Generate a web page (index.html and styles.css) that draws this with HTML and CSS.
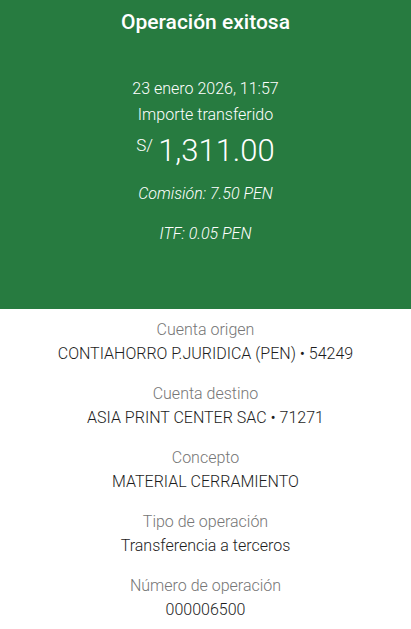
FILE: index.html
```html
<!DOCTYPE html>
<html lang="es">
<head>
    <meta charset="UTF-8">
    <meta name="viewport" content="width=device-width, initial-scale=1.0">
    <title>Operación exitosa</title>
    <link rel="stylesheet" href="styles.css">
</head>
<body>
    <header class="hero">
        <h1>Operación exitosa</h1>

        <div class="summary">
            <p class="date">23 enero 2026, 11:57</p>
            <p class="amount-label">Importe transferido</p>
            <p class="amount"><span class="currency">S/</span>1,311.00</p>
            <div class="fees">
                <p class="fee">Comisión: 7.50 PEN</p>
                <p class="fee">ITF: 0.05 PEN</p>
            </div>
        </div>
    </header>

    <main class="details">
        <div class="detail">
            <span class="detail-label">Cuenta origen</span>
            <span class="detail-value">CONTIAHORRO P.JURIDICA (PEN) • 54249</span>
        </div>
        <div class="detail">
            <span class="detail-label">Cuenta destino</span>
            <span class="detail-value">ASIA PRINT CENTER SAC • 71271</span>
        </div>
        <div class="detail">
            <span class="detail-label">Concepto</span>
            <span class="detail-value">MATERIAL CERRAMIENTO</span>
        </div>
        <div class="detail">
            <span class="detail-label">Tipo de operación</span>
            <span class="detail-value">Transferencia a terceros</span>
        </div>
        <div class="detail">
            <span class="detail-label">Número de operación</span>
            <span class="detail-value">000006500</span>
        </div>
    </main>
</body>
</html>
```

FILE: styles.css
```css
body {
    font-family: 'Roboto', 'Liberation Sans', sans-serif;
    margin: 0;
    padding: 0;
    background-color: #ffffff;
    color: #1d1d1d;
    text-align: center;
}

p {
    margin: 0;
}

.hero {
    background-color: #277b40;
    color: #ffffff;
    height: 309px;
    padding-top: 8px;
    box-sizing: border-box;
}

h1 {
    font-size: 21px;
    font-weight: 500;
    margin: 0;
    line-height: 28px;
}

.summary {
    margin-top: 40px;
    display: flex;
    flex-direction: column;
    align-items: center;
}

.date,
.amount-label {
    font-size: 16px;
    font-weight: 300;
    line-height: 26px;
}

.amount {
    font-size: 31px;
    font-weight: 300;
    line-height: 34px;
    margin-top: 6px;
    display: flex;
    align-items: flex-start;
}

.currency {
    font-size: 17px;
    line-height: 22px;
    margin-right: 5px;
}

.fees {
    display: flex;
    flex-direction: column;
    gap: 20px;
    margin-top: 16px;
}

.fee {
    font-size: 16px;
    font-style: italic;
    font-weight: 300;
    line-height: 20px;
}

.details {
    display: flex;
    flex-direction: column;
    gap: 16px;
    padding-top: 9px;
}

.detail {
    display: flex;
    flex-direction: column;
    align-items: center;
}

.detail-label {
    font-size: 16px;
    font-weight: 300;
    color: #767676;
    line-height: 24px;
}

.detail-value {
    font-size: 16px;
    font-weight: 300;
    color: #1d1d1d;
    line-height: 24px;
}
```
